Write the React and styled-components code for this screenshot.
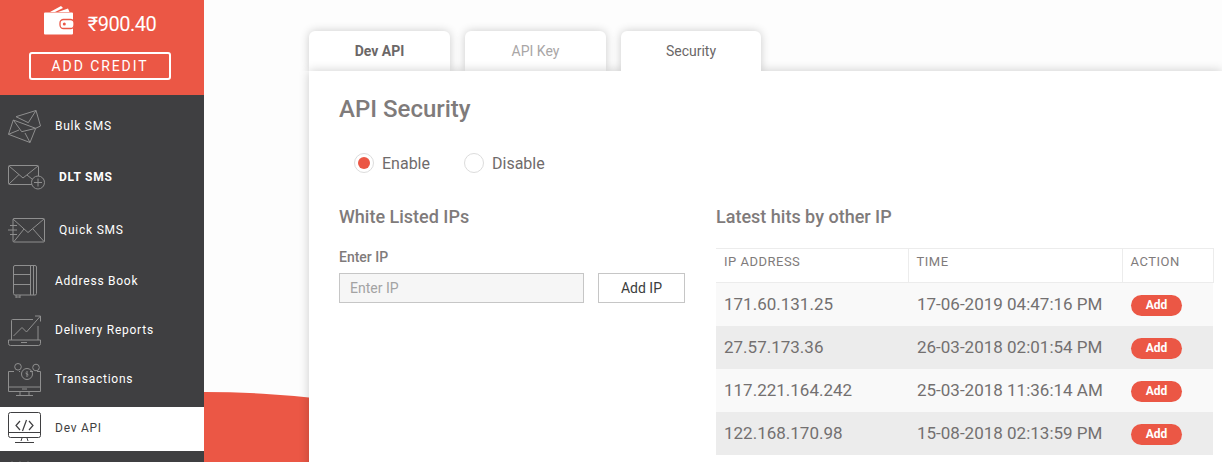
import React from 'react'
import styled, { createGlobalStyle } from 'styled-components'

const RED = '#eb5745'

const GlobalStyle = createGlobalStyle`
  html, body {
    margin: 0;
    height: 462px;
    overflow: hidden;
    background: #fdfdfd;
    font-family: Roboto, "Liberation Sans", sans-serif;
  }
  * { box-sizing: border-box; }
`

const Page = styled.div`
  display: flex;
  width: 1222px;
  height: 462px;
  overflow: hidden;
`

const Sidebar = styled.aside`
  flex: 0 0 204px;
  background: #3f3f41;
  position: relative;
  z-index: 2;
`

const Balance = styled.div`
  height: 95px;
  padding-right: 4px;
  background: ${RED};
  display: flex;
  flex-direction: column;
  align-items: center;
`

const Amount = styled.div`
  display: flex;
  align-items: center;
  gap: 13px;
  height: 48px;
  color: #fff;
  font-size: 20px;
  letter-spacing: -0.5px;
`

const WalletSlot = styled.span`
  display: flex;
  margin-top: -8px;
`

const CreditButton = styled.button`
  width: 142px;
  height: 28px;
  margin-top: 4px;
  padding: 0;
  background: transparent;
  border: 2px solid #fff;
  border-radius: 3px;
  color: #fff;
  font: 400 14px Roboto, sans-serif;
  letter-spacing: 1.9px;
`

const Menu = styled.nav`
  display: flex;
  flex-direction: column;
`

const MenuItem = styled.a`
  display: flex;
  align-items: center;
  height: ${props => props.$height}px;
  padding-left: 8px;
  padding-bottom: ${props => props.$pad || 0}px;
  background: ${props => (props.$active ? '#fff' : 'transparent')};
  color: ${props => (props.$active ? '#3f3f41' : '#fff')};
  font-size: 12px;
  font-weight: ${props => (props.$bold ? 700 : 400)};
  letter-spacing: 0.75px;
`

const IconSlot = styled.span`
  flex: 0 0 ${props => props.$width}px;
  display: flex;
  align-items: center;
  padding-left: ${props => props.$indent || 0}px;
`

const Main = styled.main`
  flex: 1;
  min-width: 0;
  position: relative;
  padding: 31px 0 0 105px;
`

const RedCurve = styled.div`
  position: absolute;
  left: -600px;
  top: 392px;
  width: 1200px;
  height: 700px;
  border-radius: 50%;
  background: ${RED};
`

const Tabs = styled.div`
  display: flex;
  gap: 15px;
  height: 40px;
  position: relative;
`

const Tab = styled.div`
  width: ${props => props.$width}px;
  height: 40px;
  background: #fff;
  border-radius: 6px 6px 0 0;
  box-shadow: 0 0 10px rgba(0, 0, 0, 0.2);
  clip-path: inset(-12px -12px 0 -12px);
  display: flex;
  align-items: center;
  justify-content: center;
  font-size: 14px;
  font-weight: ${props => (props.$bold ? 700 : 400)};
  color: ${props => props.$color};
  position: relative;
  z-index: ${props => (props.$current ? 2 : 0)};
`

const Card = styled.section`
  position: relative;
  z-index: 1;
  height: 400px;
  background: #fff;
  box-shadow: 0 0 10px rgba(0, 0, 0, 0.2);
  padding: 23px 9px 0 30px;
`

const Title = styled.h1`
  margin: 0;
  font-size: 24px;
  line-height: 30px;
  font-weight: 500;
  color: #7f7b7b;
`

const RadioRow = styled.div`
  display: flex;
  gap: 34px;
  margin: 27px 0 0 15px;
  height: 24px;
  align-items: center;
`

const RadioLabel = styled.label`
  display: flex;
  align-items: center;
  gap: 8px;
  font-size: 16px;
  color: #6f6b6b;
`

const RadioMark = styled.span`
  width: 20px;
  height: 20px;
  border-radius: 50%;
  border: 1px solid #dcdcdc;
  display: flex;
  align-items: center;
  justify-content: center;
  &::after {
    content: '';
    width: 12px;
    height: 12px;
    border-radius: 50%;
    background: ${props => (props.$on ? RED : 'transparent')};
  }
`

const Columns = styled.div`
  display: flex;
  gap: 31px;
  margin-top: 30px;
`

const LeftColumn = styled.div`
  flex: 0 0 346px;
`

const RightColumn = styled.div`
  flex: 0 0 497px;
`

const SubTitle = styled.h2`
  margin: 0;
  font-size: 18px;
  line-height: 24px;
  font-weight: 500;
  color: #7f7b7b;
`

const FieldLabel = styled.div`
  margin-top: 19px;
  font-size: 14px;
  line-height: 18px;
  font-weight: 500;
  color: #7f7b7b;
`

const FieldRow = styled.div`
  display: flex;
  justify-content: space-between;
  margin-top: 7px;
`

const IpInput = styled.input`
  width: 245px;
  height: 30px;
  padding: 0 10px;
  background: #f6f6f6;
  border: 1px solid #c6c6c6;
  font: 400 14px Roboto, sans-serif;
  &::placeholder { color: #a3a3a3; opacity: 1; }
`

const AddIpButton = styled.button`
  width: 87px;
  height: 30px;
  padding: 0;
  background: #fff;
  border: 1px solid #c6c6c6;
  font: 400 14px Roboto, sans-serif;
  color: #3c3c3c;
`

const HitsTable = styled.table`
  width: 497px;
  margin-top: 19px;
  border-collapse: collapse;
  table-layout: fixed;
`

const HeadCell = styled.th`
  width: ${props => props.$width}px;
  height: 34px;
  padding: 0 8px 8px 8px;
  text-align: left;
  font-size: 13px;
  font-weight: 400;
  letter-spacing: 0.5px;
  color: #7f7b7b;
  border: 1px solid #ececec;
  border-left-width: ${props => (props.$first ? 0 : 1)}px;
`

const Row = styled.tr`
  height: 43px;
  background: ${props => (props.$odd ? '#ececec' : '#f9f9f9')};
`

const Cell = styled.td`
  padding: 0 0 0 ${props => (props.$first ? 8 : 9)}px;
  font-size: 17px;
  color: #737070;
`

const Pill = styled.span`
  display: flex;
  align-items: center;
  justify-content: center;
  width: 51px;
  height: 21px;
  margin-top: 2px;
  border-radius: 11px;
  background: ${RED};
  color: #fff;
  font-size: 12px;
  font-weight: 700;
`

const Line = ({ w, h, children }) => (
  <svg width={w} height={h} viewBox={`0 0 ${w} ${h}`} fill="none" stroke="#8f8f8f" strokeWidth="1">
    {children}
  </svg>
)

const WalletIcon = () => (
  <svg width="31" height="31" viewBox="0 0 31 31">
    <path fill="#fff" d="M6 7 L17 1 L19 3 L11 7 Z M14 7 L24 3.500 L25.500 7 Z" />
    <path fill="#fff" d="M0 8.500 a1 1 0 0 1 1 -1 H28 a1 1 0 0 1 1 1 V28.500 a1 1 0 0 1 -1 1 H1 a1 1 0 0 1 -1 -1 Z" />
    <rect x="16" y="14.500" width="14" height="9" rx="3.500" fill="#fff" stroke={RED} strokeWidth="1.300" />
    <circle cx="20.300" cy="19" r="1.500" fill={RED} />
  </svg>
)

const BulkIcon = () => (
  <Line w="33" h="33">
    <path d="M8 6.700 L28 0.500 L32.500 16 L27.700 18.300" />
    <path d="M8 6.700 L20.300 12.700 L28 0.500" />
    <path d="M5.300 10 L27.700 18.300 L22 32.500 L0.500 24.300 Z" />
    <path d="M5.300 10 L13.700 21.700 L27.700 18.300 M0.500 24.300 L11 20 M17 23 L22 32.500" />
  </Line>
)

const DltIcon = () => (
  <Line w="38" h="25">
    <rect x="0.500" y="0.500" width="30" height="19" rx="1" />
    <path d="M1 1 L15 13 L30 1 M1 19 L11 9.500 M19 10 L24 14" />
    <circle cx="30" cy="17.500" r="6.500" fill="#3f3f41" />
    <path d="M30 13.500 V21.500 M26 17.500 H34" />
  </Line>
)

const QuickIcon = () => (
  <Line w="38" h="25">
    <path d="M5 6 V1.500 a1 1 0 0 1 1 -1 H35.500 a1 1 0 0 1 1 1 V23 a1 1 0 0 1 -1 1 H6 a1 1 0 0 1 -1 -1 V18" />
    <path d="M5 1 L20 14.500 L36 1 M6 23.500 L16 11 M25 11 L36 23.500" />
    <path d="M2 7.500 H9 M0 12 H9 M2 16.500 H9 M5 6 V18" />
  </Line>
)

const BookIcon = () => (
  <Line w="24" h="33">
    <rect x="0.500" y="0.500" width="23" height="29.500" rx="1.500" />
    <path d="M17.500 1 V30 M20.500 1 V30 M1 9.500 H17.500 M1 19.500 H17.500" />
    <path d="M3 30 V33 M7 30 V33 M3 32 H7" />
  </Line>
)

const ReportIcon = () => (
  <Line w="33" h="31">
    <path d="M3.500 25 V5.500 a1 1 0 0 1 1 -1 H25 M30 11 V25" />
    <path d="M0.500 25 H32.500 V28.500 a2 2 0 0 1 -2 2 H2.500 a2 2 0 0 1 -2 -2 Z M13 27.500 H19" />
    <path d="M5.500 21 L14 12.500 L18.500 17 L32.500 1 M27 1 H32.500 V6.500" />
  </Line>
)

const TransactionIcon = () => (
  <Line w="33" h="33">
    <path d="M6 8.500 H0.500 V28.500 H32.500 V8.500 H29 M0.500 24 H32.500 M12 28.500 V32 M21 28.500 V32 M8 32.500 H25 M14 26 H19" />
    <path d="M11 8.500 H12 M22 8.500 H25" />
    <circle cx="10" cy="3.800" r="3.300" />
    <circle cx="28" cy="4.500" r="3.300" />
    <circle cx="19" cy="11" r="5.500" />
    <path d="M19 8 V14 M17.500 10 L20.500 12" />
  </Line>
)

const CodeIcon = () => (
  <svg width="33" height="31" viewBox="0 0 33 31" fill="none" stroke="#3f3f41" strokeWidth="1">
    <rect x="0.500" y="0.500" width="32" height="25" rx="2" />
    <path d="M1 20.500 H32 M14 26 L13 29 M19 26 L20 29 M7 30.500 H26" />
    <path d="M12 9 L8 13.500 L12 18 M21 9 L25 13.500 L21 18 M18.500 8 L14.500 19" strokeWidth="1.200" />
  </svg>
)

// only the top edge of the next icon is visible above the fold
const PeekIcon = () => (
  <svg width="33" height="26" viewBox="0 0 33 26" fill="none" stroke="#6d6d6f" strokeWidth="1">
    <path d="M4 8 V1 M12 8 V1 M20 8 V1 M28 8 V3" />
  </svg>
)

const menu = [
  { label: 'Bulk SMS', icon: <BulkIcon />, height: 62, slot: 47 },
  { label: 'DLT SMS', icon: <DltIcon />, height: 42, pad: 2, slot: 51, bold: true },
  { label: 'Quick SMS', icon: <QuickIcon />, height: 62, slot: 51 },
  { label: 'Address Book', icon: <BookIcon />, height: 40, slot: 47, indent: 5 },
  { label: 'Delivery Reports', icon: <ReportIcon />, height: 58, slot: 47 },
  { label: 'Transactions', icon: <TransactionIcon />, height: 48, pad: 8, slot: 47 },
  { label: 'Dev API', icon: <CodeIcon />, height: 44, pad: 3, slot: 47, active: true },
  { label: '', icon: <PeekIcon />, height: 44, slot: 47 },
]

const hits = [
  ['171.60.131.25', '17-06-2019 04:47:16 PM'],
  ['27.57.173.36', '26-03-2018 02:01:54 PM'],
  ['117.221.164.242', '25-03-2018 11:36:14 AM'],
  ['122.168.170.98', '15-08-2018 02:13:59 PM'],
]

export default function App() {
  return (
    <Page>
      <GlobalStyle />
      <Sidebar>
        <Balance>
          <Amount>
            <WalletSlot><WalletIcon /></WalletSlot>
            <span>₹900.40</span>
          </Amount>
          <CreditButton>ADD CREDIT</CreditButton>
        </Balance>
        <Menu>
          {menu.map(item => (
            <MenuItem
              key={item.label}
              $height={item.height}
              $pad={item.pad}
              $bold={item.bold}
              $active={item.active}
            >
              <IconSlot $width={item.slot} $indent={item.indent}>{item.icon}</IconSlot>
              {item.label}
            </MenuItem>
          ))}
        </Menu>
      </Sidebar>
      <Main>
        <RedCurve />
        <Tabs>
          <Tab $width={141} $bold $color="#6b6767">Dev API</Tab>
          <Tab $width={141} $color="#a9a6a6">API Key</Tab>
          <Tab $width={140} $color="#6b6767" $current>Security</Tab>
        </Tabs>
        <Card>
          <Title>API Security</Title>
          <RadioRow>
            <RadioLabel><RadioMark $on />Enable</RadioLabel>
            <RadioLabel><RadioMark />Disable</RadioLabel>
          </RadioRow>
          <Columns>
            <LeftColumn>
              <SubTitle>White Listed IPs</SubTitle>
              <FieldLabel>Enter IP</FieldLabel>
              <FieldRow>
                <IpInput placeholder="Enter IP" />
                <AddIpButton>Add IP</AddIpButton>
              </FieldRow>
            </LeftColumn>
            <RightColumn>
              <SubTitle>Latest hits by other IP</SubTitle>
              <HitsTable>
                <thead>
                  <tr>
                    <HeadCell $width={192} $first>IP ADDRESS</HeadCell>
                    <HeadCell $width={214}>TIME</HeadCell>
                    <HeadCell $width={91}>ACTION</HeadCell>
                  </tr>
                </thead>
                <tbody>
                  {hits.map(([ip, time], index) => (
                    <Row key={ip} $odd={index % 2 === 1}>
                      <Cell $first>{ip}</Cell>
                      <Cell>{time}</Cell>
                      <Cell><Pill>Add</Pill></Cell>
                    </Row>
                  ))}
                </tbody>
              </HitsTable>
            </RightColumn>
          </Columns>
        </Card>
      </Main>
    </Page>
  )
}
